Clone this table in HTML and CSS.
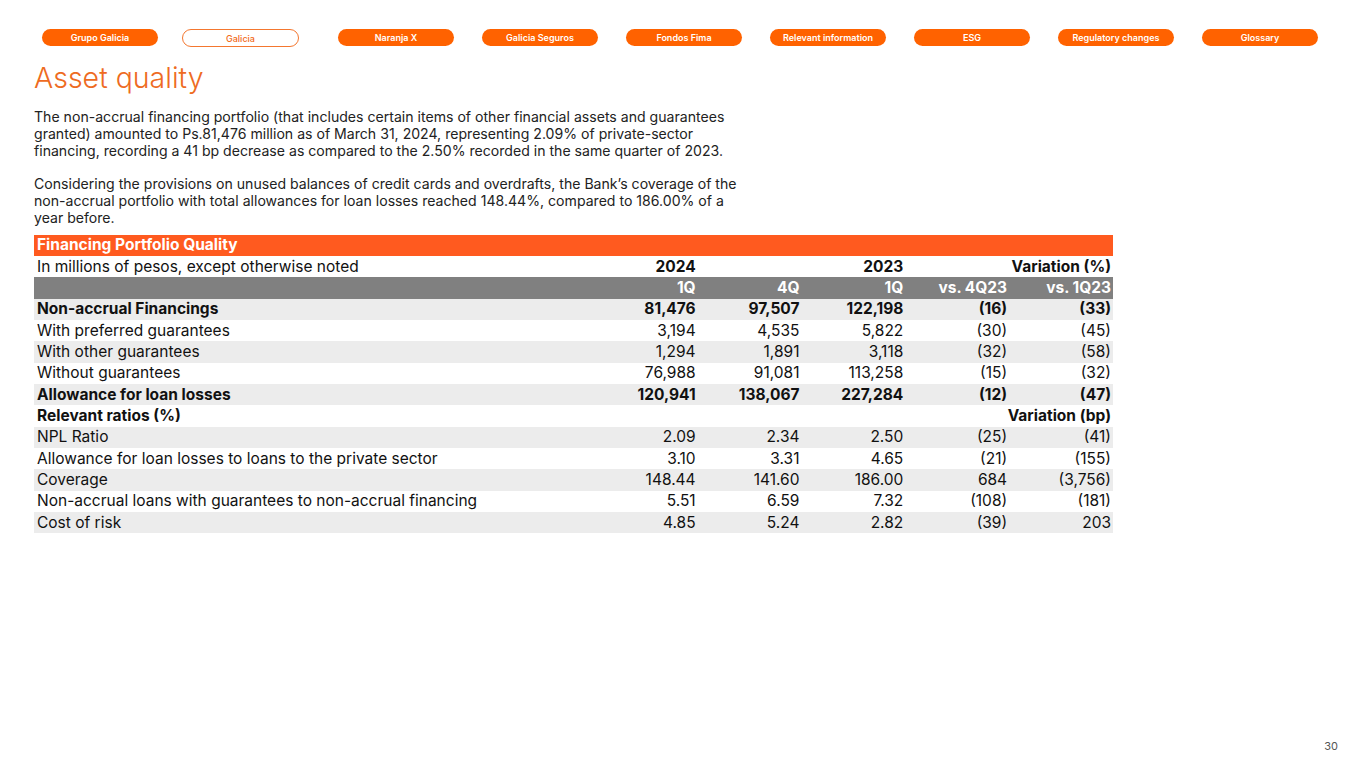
FILE: index.html
```html
<!DOCTYPE html>
<html lang="en">
<head>
<meta charset="utf-8">
<title>Asset quality</title>
<link rel="stylesheet" href="styles.css">
</head>
<body>
<div class="page">
  <nav class="nav">
    <a class="pill pill-first">Grupo Galicia</a>
    <a class="pill pill-active">Galicia</a>
    <a class="pill">Naranja X</a>
    <a class="pill">Galicia Seguros</a>
    <a class="pill">Fondos Fima</a>
    <a class="pill">Relevant information</a>
    <a class="pill">ESG</a>
    <a class="pill">Regulatory changes</a>
    <a class="pill">Glossary</a>
  </nav>
  <h1 class="title">Asset quality</h1>
  <div class="intro">
    <p>The non-accrual financing portfolio (that includes certain items of other financial assets and guarantees granted) amounted to Ps.81,476 million as of March 31, 2024, representing 2.09% of private-sector financing, recording a 41 bp decrease as compared to the 2.50% recorded in the same quarter of 2023.</p>
    <p>Considering the provisions on unused balances of credit cards and overdrafts, the Bank’s coverage of the non-accrual portfolio with total allowances for loan losses reached 148.44%, compared to 186.00% of a year before.</p>
  </div>
  <table class="tbl">
    <tr class="r-title"><td colspan="6">Financing Portfolio Quality</td></tr>
    <tr class="r-head"><td>In millions of pesos, except otherwise noted</td><td class="n b">2024</td><td></td><td class="n b">2023</td><td class="n b" colspan="2">Variation (%)</td></tr>
    <tr class="r-sub"><td></td><td class="n">1Q</td><td class="n">4Q</td><td class="n">1Q</td><td class="n">vs. 4Q23</td><td class="n">vs. 1Q23</td></tr>
    <tr class="g b"><td>Non-accrual Financings</td><td class="n">81,476</td><td class="n">97,507</td><td class="n">122,198</td><td class="n">(16)</td><td class="n">(33)</td></tr>
    <tr><td>With preferred guarantees</td><td class="n">3,194</td><td class="n">4,535</td><td class="n">5,822</td><td class="n">(30)</td><td class="n">(45)</td></tr>
    <tr class="g"><td>With other guarantees</td><td class="n">1,294</td><td class="n">1,891</td><td class="n">3,118</td><td class="n">(32)</td><td class="n">(58)</td></tr>
    <tr><td>Without guarantees</td><td class="n">76,988</td><td class="n">91,081</td><td class="n">113,258</td><td class="n">(15)</td><td class="n">(32)</td></tr>
    <tr class="g b"><td>Allowance for loan losses</td><td class="n">120,941</td><td class="n">138,067</td><td class="n">227,284</td><td class="n">(12)</td><td class="n">(47)</td></tr>
    <tr class="b"><td>Relevant ratios (%)</td><td></td><td></td><td></td><td class="n" colspan="2">Variation (bp)</td></tr>
    <tr class="g"><td>NPL Ratio</td><td class="n">2.09</td><td class="n">2.34</td><td class="n">2.50</td><td class="n">(25)</td><td class="n">(41)</td></tr>
    <tr><td>Allowance for loan losses to loans to the private sector</td><td class="n">3.10</td><td class="n">3.31</td><td class="n">4.65</td><td class="n">(21)</td><td class="n">(155)</td></tr>
    <tr class="g"><td>Coverage</td><td class="n">148.44</td><td class="n">141.60</td><td class="n">186.00</td><td class="n">684</td><td class="n">(3,756)</td></tr>
    <tr><td>Non-accrual loans with guarantees to non-accrual financing</td><td class="n">5.51</td><td class="n">6.59</td><td class="n">7.32</td><td class="n">(108)</td><td class="n">(181)</td></tr>
    <tr class="g"><td>Cost of risk</td><td class="n">4.85</td><td class="n">5.24</td><td class="n">2.82</td><td class="n">(39)</td><td class="n">203</td></tr>
  </table>
  <div class="pagenum">30</div>
</div>
</body>
</html>
```

FILE: styles.css
```css
html, body {
  margin: 0;
  padding: 0;
  background: #ffffff;
}
body {
  font-family: Inter, "Liberation Sans", sans-serif;
  color: #1a1a1a;
}
.page {
  width: 1365px;
  height: 768px;
  position: relative;
  box-sizing: border-box;
  padding: 28px 0 0 34px;
}
.nav {
  display: flex;
  align-items: center;
  padding-left: 8px;
  gap: 28px;
  height: 19px;
}
.pill {
  display: flex;
  align-items: center;
  justify-content: center;
  width: 116px;
  height: 17px;
  box-sizing: border-box;
  border-radius: 9px;
  background: #ff6200;
  color: #ffffff;
  font-size: 9px;
  font-weight: 600;
  text-decoration: none;
}
.pill-first {
  margin-right: -4px;
}
.pill-active {
  background: #ffffff;
  border: 1px solid #f4772f;
  color: #f26b21;
  font-weight: 500;
  width: 117px;
  height: 18px;
  margin-top: 1px;
  margin-right: 11px;
}
.title {
  margin: 14px 0 0 0;
  font-size: 28.5px;
  font-weight: 300;
  color: #ee6b22;
  line-height: 34px;
}
.intro {
  margin-top: 14px;
  width: 706px;
  font-size: 14.1px;
  line-height: 16.8px;
  color: #222222;
}
.intro p {
  margin: 0 0 16.8px 0;
}
.intro p:last-child {
  margin-bottom: 0;
}
.tbl {
  margin-top: 8px;
  width: 1079px;
  border-collapse: collapse;
  font-size: 15.5px;
  color: #111111;
}
.tbl td {
  height: 21.35px;
  padding: 0 2px 0 3px;
  line-height: 18px;
  white-space: nowrap;
}
.tbl td:first-child {
  width: 553px;
}
.tbl td.n {
  text-align: right;
  width: 98.5px;
}
.tbl .b td, .tbl td.b {
  font-weight: 700;
}
.r-title td {
  background: #ff5a1f;
  color: #ffffff;
  font-weight: 700;
}
.r-sub td {
  background: #808080;
  color: #ffffff;
  font-weight: 700;
}
.tbl tr.g td {
  background: #ececec;
}
.pagenum {
  position: absolute;
  right: 27px;
  bottom: 15px;
  font-size: 11px;
  color: #555555;
}
```
